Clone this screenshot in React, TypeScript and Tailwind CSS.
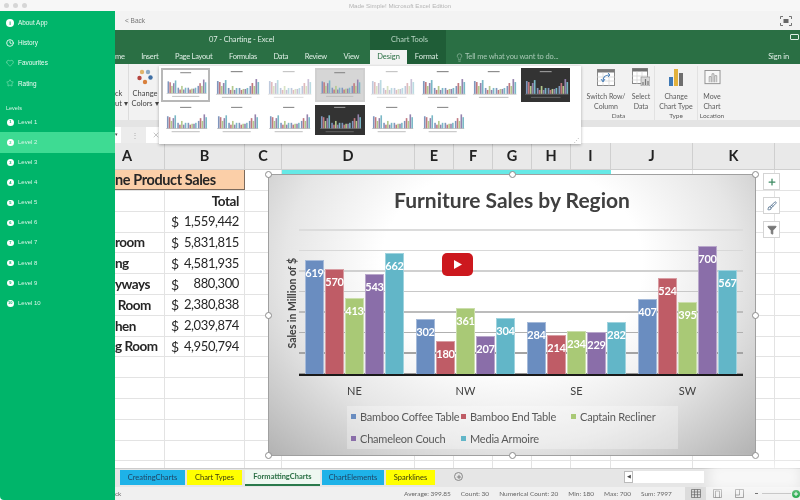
import { Clock, Heart, Star, Plus, Filter, Lightbulb, Brush, X } from "lucide-react";

const LEVELS = ["Level 1", "Level 2", "Level 3", "Level 4", "Level 5", "Level 6", "Level 7", "Level 8", "Level 9", "Level 10"];

const COLUMNS = [
  { name: "A", width: 50, pad: "justify-start pl-[7px]" },
  { name: "B", width: 80, pad: "justify-center" },
  { name: "C", width: 37, pad: "justify-center" },
  { name: "D", width: 133, pad: "justify-center" },
  { name: "E", width: 39, pad: "justify-center" },
  { name: "F", width: 39, pad: "justify-center" },
  { name: "G", width: 39, pad: "justify-center" },
  { name: "H", width: 39, pad: "justify-center" },
  { name: "I", width: 40, pad: "justify-center" },
  { name: "J", width: 82, pad: "justify-center" },
  { name: "K", width: 82, pad: "justify-center" },
];

const SALES = [
  { label: "", amount: "1,559,442" },
  { label: "room", amount: "5,831,815" },
  { label: "ng", amount: "4,581,935" },
  { label: "yways", amount: "880,300" },
  { label: " Room", amount: "2,380,838" },
  { label: "hen", amount: "2,039,874" },
  { label: "g Room", amount: "4,950,794" },
];

const BAR_COLORS = ["bg-[#6a8dc0]", "bg-[#bf5c66]", "bg-[#a9c976]", "bg-[#8a6ea9]", "bg-[#62b6c8]"];

const REGIONS = [
  { name: "NE", values: [619, 570, 413, 543, 662] },
  { name: "NW", values: [302, 180, 361, 207, 304] },
  { name: "SE", values: [284, 214, 234, 229, 282] },
  { name: "SW", values: [407, 524, 395, 700, 567] },
];

const LEGEND = [
  { name: "Bamboo Coffee Table", color: "bg-[#6a8dc0]" },
  { name: "Bamboo End Table", color: "bg-[#bf5c66]" },
  { name: "Captain Recliner", color: "bg-[#a9c976]" },
  { name: "Chameleon Couch", color: "bg-[#8a6ea9]" },
  { name: "Media Armoire", color: "bg-[#62b6c8]" },
];

const GRID_LINES = ["#dcdcdc", "#d8d8d8", "#d0d0d0", "#c8c8c8", "#bcbcbc", "#b0b0b0", "#a4a4a4", "#989898"];

const THUMB_COLORS = ["#7f96bd", "#c0787f", "#b3c98c", "#9582ad", "#7ab8c6"];
const THUMB_HEIGHTS = [
  [13, 12, 8, 11, 14],
  [6, 4, 8, 4, 6],
  [6, 4, 5, 5, 6],
  [8, 11, 8, 15, 12],
];

const GALLERY = [
  { kind: "selected" },
  { kind: "plain" },
  { kind: "pale" },
  { kind: "hover" },
  { kind: "pale" },
  { kind: "plain" },
  { kind: "plain" },
  { kind: "dark" },
  { kind: "plain" },
  { kind: "plain" },
  { kind: "plain" },
  { kind: "dark" },
  { kind: "plain" },
  { kind: "plain" },
];

function MiniChart({ kind }: { kind: string }) {
  const dark = kind === "dark";
  const frame =
    kind === "selected"
      ? "border-2 border-[#b8b8b8] bg-white"
      : kind === "hover"
        ? "border-2 border-[#d0d0d0] bg-[#d6d6d6]"
        : dark
          ? "bg-[#333333]"
          : "bg-white";
  return (
    <div className={`h-full w-full ${frame}`}>
      <svg viewBox="0 0 50 32" className={`h-full w-full ${kind === "pale" ? "opacity-50" : ""}`}>
        <rect x="19" y="2" width="12" height="1" fill={dark ? "#aaaaaa" : "#777777"} />
        {THUMB_HEIGHTS.map((group, g) =>
          group.map((h, b) => (
            <rect
              key={`${g}-${b}`}
              x={5 + g * 11 + b * 2}
              y={25 - h}
              width="1.7"
              height={h}
              fill={THUMB_COLORS[b]}
            />
          )),
        )}
        <rect x="4" y="25" width="44" height="0.5" fill={dark ? "#888888" : "#999999"} />
        <rect x="10" y="28" width="30" height="1" fill={dark ? "#666666" : "#bbbbbb"} />
      </svg>
    </div>
  );
}

function Sidebar() {
  const top = [
    {
      name: "About App",
      icon: (
        <span className="grid h-[8px] w-[8px] place-items-center rounded-full bg-white text-[6px] font-bold leading-none text-[#00b56a]">
          i
        </span>
      ),
    },
    { name: "History", icon: <Clock className="h-[8px] w-[8px]" strokeWidth={2.5} /> },
    { name: "Favourites", icon: <Heart className="h-[8px] w-[8px] text-[#a8ecc9]" strokeWidth={1.5} /> },
    { name: "Rating", icon: <Star className="h-[8px] w-[8px] text-[#a8ecc9]" strokeWidth={1.5} /> },
  ];
  return (
    <aside className="z-10 flex h-full w-[115px] shrink-0 flex-col rounded-bl-[4px] bg-[#00b56a] pt-[2px] font-['Liberation_Sans',sans-serif] text-[#d9f5e7]">
      {top.map((item) => (
        <div key={item.name} className="flex h-[20.1px] items-center gap-[4px] pl-[6px] text-[6.4px] text-[#eefbf4]">
          <span className="grid w-[8px] place-items-center text-white">{item.icon}</span>
          {item.name}
        </div>
      ))}
      <div className="mt-[1px] flex h-[19px] items-end pb-[1px] pl-[6px] text-[5.5px]">Levels</div>
      <div className="mt-[-1px] flex flex-col">
        {LEVELS.map((level, i) => (
          <div
            key={level}
            className={`flex h-[20.1px] items-center gap-[4.5px] pl-[7px] text-[6px] ${i === 1 ? "bg-[#3edb93]" : ""}`}
          >
            <span
              className={`grid h-[6.5px] w-[6.5px] place-items-center rounded-full bg-white text-[4px] font-bold leading-none ${i === 1 ? "text-[#3edb93]" : "text-[#00b56a]"}`}
            >
              {i + 1}
            </span>
            {level}
          </div>
        ))}
      </div>
    </aside>
  );
}

function GreenBar() {
  return (
    <div className="flex h-[34px] shrink-0 whitespace-nowrap bg-[#2a6f44] text-[7.5px] text-[#dfeee5]">
      <div className="flex w-[255px] flex-col">
        <div className="flex h-[20px] items-center pl-[94px] text-[7.5px] tracking-[-0.1px]">07 - Charting - Excel</div>
        <div className="flex h-[14px] items-center gap-[16.5px] tracking-[-0.25px]">
          <span>me</span>
          <span>Insert</span>
          <span>Page Layout</span>
          <span>Formulas</span>
          <span>Data</span>
          <span>Review</span>
          <span>View</span>
        </div>
      </div>
      <div className="flex w-[76px] flex-col bg-[#1f5d37]">
        <div className="flex h-[20px] items-center pl-[21px] text-[#b9d6c4]">Chart Tools</div>
        <div className="flex h-[14px]">
          <span className="flex w-[37px] items-center justify-center bg-[#f3f3f3] text-[#2a6f44]">Design</span>
          <span className="flex flex-1 items-center justify-center">Format</span>
        </div>
      </div>
      <div className="flex flex-1 flex-col">
        <div className="flex h-[20px] items-start justify-end pr-[1px] pt-[4px]">
          <span className="h-[6px] w-[9px] rounded-[1px] border border-[#dfeee5]" />
        </div>
        <div className="flex h-[14px] items-center pl-[9px] tracking-[-0.15px] text-[#a9c9b6]">
          <Lightbulb className="mr-[1px] h-[9px] w-[9px]" strokeWidth={1.5} />
          Tell me what you want to do...
          <span className="ml-auto mr-[11px] text-[#dfeee5]">Sign in</span>
        </div>
      </div>
    </div>
  );
}

function RibbonIcon({ kind }: { kind: string }) {
  if (kind === "switch") {
    return (
      <svg viewBox="0 0 18 17" className="h-[17px] w-[18px]">
        <rect x="0.5" y="0.5" width="17" height="16" fill="#fff" stroke="#8a8a8a" />
        <rect x="0.5" y="0.5" width="17" height="3" fill="#7a7a7a" />
        <path d="M0 8h18M0 12h18M6 3v14M12 3v14" stroke="#c9c9c9" strokeWidth="0.6" />
        <path d="M6 12 C6 8 9 6 12 6" stroke="#3f79b5" strokeWidth="1.2" fill="none" />
        <path d="M4 10l2 3 2-3M11 4l2 2-2 2" stroke="#3f79b5" strokeWidth="0.9" fill="none" />
      </svg>
    );
  }
  if (kind === "select") {
    return (
      <svg viewBox="0 0 18 18" className="h-[18px] w-[18px]">
        <rect x="0.5" y="0.5" width="15" height="15" fill="#fff" stroke="#8a8a8a" />
        <rect x="0.5" y="0.5" width="15" height="3" fill="#6f6f6f" />
        <path d="M0 8h16M0 12h16M5 3v13M10 3v13" stroke="#c9c9c9" strokeWidth="0.6" />
        <rect x="9" y="9" width="9" height="9" fill="#d9d9d9" stroke="#8a8a8a" strokeWidth="0.6" />
        <path d="M11 17v-3M13.5 17v-6M16 17v-4" stroke="#777" strokeWidth="1.2" />
      </svg>
    );
  }
  if (kind === "type") {
    return (
      <svg viewBox="0 0 16 17" className="h-[17px] w-[16px]">
        <rect x="1" y="8" width="4" height="9" fill="#3f79b5" />
        <rect x="6" y="0" width="4" height="17" fill="#e2b13c" />
        <rect x="11" y="4" width="4" height="13" fill="#6e6e6e" />
      </svg>
    );
  }
  return (
    <svg viewBox="0 0 17 17" className="h-[16px] w-[17px]">
      <rect x="0.5" y="0.5" width="16" height="14" fill="#f8f8f8" stroke="#8f8f8f" />
      <path d="M5 13V7h2v6M8 13V4h2v9M11 13V6h2v7" fill="none" stroke="#8f8f8f" strokeWidth="0.8" />
    </svg>
  );
}

function RibbonItem({ kind, lines, width }: { kind: string; lines: string[]; width: string }) {
  return (
    <div className={`flex flex-col items-center whitespace-nowrap ${width}`}>
      <div className="flex h-[20px] items-end">
        <RibbonIcon kind={kind} />
      </div>
      <div className="mt-[5px] text-center text-[7px] leading-[10px]">
        {lines.map((line) => (
          <div key={line}>{line}</div>
        ))}
      </div>
    </div>
  );
}

function Ribbon() {
  return (
    <div className="relative flex h-[56px] shrink-0 bg-[#f2f2f2] text-[#5c5c5c]">
      <div className="flex w-[14px] flex-col whitespace-nowrap border-r border-[#dcdcdc] pt-[25px] text-[7.5px] leading-[10px] text-[#444444]">
        <span>ck</span>
        <span>ut ▾</span>
      </div>
      <div className="flex w-[32px] flex-col items-center whitespace-nowrap pt-[5px] text-[7.5px] leading-[10px] text-[#444444]">
        <svg viewBox="0 0 16 16" className="h-[16px] w-[16px]">
          <circle cx="5" cy="3" r="2.2" fill="#e0b46c" />
          <circle cx="11" cy="3" r="2.2" fill="#8aa8c4" />
          <circle cx="2.5" cy="9" r="2.2" fill="#b5453f" />
          <circle cx="13.5" cy="8.5" r="2.2" fill="#3f6fa5" />
          <circle cx="8" cy="13" r="2.2" fill="#d9803c" />
        </svg>
        <span className="mt-[4px]">Change</span>
        <span>Colors ▾</span>
      </div>
      <div className="ml-auto mr-[74px] flex pt-[2px]">
        <div className="flex w-[72px] flex-col border-r border-[#e2e2e2]">
          <div className="flex h-[45px]">
            <RibbonItem kind="switch" lines={["Switch Row/", "Column"]} width="w-[46px]" />
            <RibbonItem kind="select" lines={["Select", "Data"]} width="w-[24px]" />
          </div>
          <div className="text-center text-[6.5px]">Data</div>
        </div>
        <div className="flex w-[43px] flex-col border-r border-[#e2e2e2]">
          <div className="h-[45px]">
            <RibbonItem kind="type" lines={["Change", "Chart Type"]} width="w-[42px]" />
          </div>
          <div className="text-center text-[6.5px]">Type</div>
        </div>
        <div className="flex w-[28px] flex-col">
          <div className="h-[45px]">
            <RibbonItem kind="move" lines={["Move", "Chart"]} width="w-[28px]" />
          </div>
          <div className="text-center text-[6.5px]">Location</div>
        </div>
      </div>
      <div className="absolute left-[44px] top-[2px] z-[5] h-[78px] w-[422px] bg-white shadow-[0_1px_3px_rgba(0,0,0,0.3)]">
        <div className="grid h-[70px] grid-cols-[repeat(8,51.4px)] grid-rows-[34px_30px] gap-y-[3px] pl-[1px] pt-[2px]">
          {GALLERY.map((item, i) => (
            <div key={i} className="px-[1px]">
              <MiniChart kind={item.kind} />
            </div>
          ))}
        </div>
        <span className="absolute bottom-[1px] right-[2px] text-[5px] leading-none text-[#999999]">⋰</span>
      </div>
    </div>
  );
}

function FormulaRow() {
  return (
    <div className="shrink-0">
      <div className="h-[7px] bg-[#e4e4e4]" />
      <div className="flex h-[16px] items-center bg-[#ececec]">
        <div className="flex h-full w-[6px] items-center bg-white text-[5px] text-[#444444]">▾</div>
        <span className="ml-[10px] text-[8px] leading-none text-[#aaaaaa]">⋮</span>
        <div className="ml-[7px] flex h-full w-[20px] items-center justify-center bg-white">
          <X className="h-[8px] w-[8px] text-[#aaaaaa]" />
        </div>
        <div className="ml-[1px] h-full flex-1 bg-white" />
      </div>
    </div>
  );
}

function SheetRow({ children, height = "h-[20.8px]" }: { children: React.ReactNode; height?: string }) {
  return <div className={`flex ${height} border-b border-[#e3e3e3]`}>{children}</div>;
}

function RestCells({ teal }: { teal?: boolean }) {
  return (
    <>
      {COLUMNS.slice(2).map((col) => {
        const filled = teal && !["C", "J", "K"].includes(col.name);
        return (
          <div
            key={col.name}
            style={{ width: col.width }}
            className={`shrink-0 border-r ${filled ? "border-[#66e9e6] bg-[#66e9e6]" : "border-[#e3e3e3]"}`}
          />
        );
      })}
    </>
  );
}

function HandleDot({ className }: { className: string }) {
  return <span className={`absolute h-[7px] w-[7px] rounded-full border border-[#8c8c8c] bg-white ${className}`} />;
}

function SalesChart() {
  return (
    <div className="absolute left-[153px] top-[4px] h-[282px] w-[488px] border border-[#a0a0a0] bg-[radial-gradient(ellipse_at_50%_32%,#ffffff_38%,#e6e6e6_66%,#b2b2b2_100%)]">
      <HandleDot className="-left-[4px] -top-[4px]" />
      <HandleDot className="left-[240px] -top-[4px]" />
      <HandleDot className="-right-[4px] -top-[4px]" />
      <HandleDot className="-left-[4px] top-[137px]" />
      <HandleDot className="-right-[4px] top-[137px]" />
      <HandleDot className="-left-[4px] -bottom-[4px]" />
      <HandleDot className="left-[240px] -bottom-[4px]" />
      <HandleDot className="-right-[4px] -bottom-[4px]" />

      <h2 className="flex h-[54px] items-center justify-center pb-[5px] text-[21px] font-bold leading-none text-[#404040]">
        Furniture Sales by Region
      </h2>

      <span className="absolute left-[16px] top-[83px] rotate-180 text-[10.5px] font-bold text-[#404040] [writing-mode:vertical-rl]">
        Sales in Million of $
      </span>

      <div className="relative ml-[30px] h-[147px] w-[444px] border-b-2 border-[#1a1a1a]">
        <div className="flex h-full flex-col justify-between">
          {GRID_LINES.map((color) => (
            <div key={color} className="h-[1.5px]" style={{ backgroundColor: color }} />
          ))}
        </div>
        <div className="absolute inset-0 flex items-end gap-[12px] pl-[6px]">
          {REGIONS.map((region) => (
            <div key={region.name} className="flex w-[99px] items-end gap-[1px]">
              {region.values.map((value, i) => (
                <div
                  key={i}
                  style={{ height: value * 0.1835 }}
                  className={`flex w-[19px] justify-center border border-b-0 border-white/40 pt-[5px] text-[11px] font-bold leading-[14px] tracking-[-0.2px] text-white ${BAR_COLORS[i]}`}
                >
                  {value}
                </div>
              ))}
            </div>
          ))}
        </div>
      </div>

      <div className="ml-[30px] flex h-[30px] w-[444px] items-center text-[11px] text-[#404040]">
        {REGIONS.map((region) => (
          <span key={region.name} className="w-[111px] text-center">
            {region.name}
          </span>
        ))}
      </div>

      <div className="ml-[78px] grid h-[43px] w-[331px] grid-cols-[110px_110px_111px] content-center gap-y-[6px] bg-white/30 pl-[4px] text-[11px] leading-[16px] tracking-[-0.2px] text-[#595959]">
        {LEGEND.map((item) => (
          <div key={item.name} className="flex items-center gap-[4px] whitespace-nowrap">
            <span className={`h-[5px] w-[5px] shrink-0 ${item.color}`} />
            {item.name}
          </div>
        ))}
      </div>

      <svg viewBox="0 0 31 23" className="absolute left-[173px] top-[78px] h-[23px] w-[31px]">
        <rect width="31" height="23" rx="5" fill="#cc181e" />
        <path d="M12 7l8 4.5-8 4.5z" fill="#ffffff" />
      </svg>
    </div>
  );
}

function ChartTool({ children }: { children: React.ReactNode }) {
  return (
    <div className="grid h-[17px] w-[17px] place-items-center border border-[#d4d4d4] bg-white">{children}</div>
  );
}

function Sheet() {
  return (
    <div className="min-h-0 flex-1 overflow-hidden bg-white">
      <div className="flex h-[27px] border-b border-[#cfcfcf] bg-[#e9e9e9] text-[14.5px] font-bold text-[#222222]">
        {COLUMNS.map((col) => (
          <div
            key={col.name}
            style={{ width: col.width }}
            className={`flex shrink-0 items-center border-r border-[#cfcfcf] ${col.pad}`}
          >
            {col.name}
          </div>
        ))}
      </div>
      <div className="relative">
        <SheetRow height="h-[21px]">
          <div className="flex w-[130px] shrink-0 items-center whitespace-nowrap border-b border-r border-[#7b6a5c] bg-[#fbcfa8] text-[14.5px] font-bold tracking-[-0.4px] text-[#262626]">
            ne Product Sales
          </div>
          <RestCells teal />
        </SheetRow>
        <SheetRow>
          <div className="w-[50px] shrink-0 border-r border-[#e3e3e3]" />
          <div className="flex w-[80px] shrink-0 items-center justify-end border-r border-[#e3e3e3] pr-[5px] text-[13.5px] font-bold tracking-[-0.4px] text-[#262626]">
            Total
          </div>
          <RestCells />
        </SheetRow>
        {SALES.map((row) => (
          <SheetRow key={row.amount}>
            <div className="flex w-[50px] shrink-0 items-center whitespace-pre border-r border-[#e3e3e3] text-[13.5px] font-bold tracking-[-0.5px] text-[#262626]">
              {row.label}
            </div>
            <div className="flex w-[80px] shrink-0 items-center justify-between border-r border-[#e3e3e3] pl-[6px] pr-[5px] text-[13px] tracking-[-0.4px] text-[#262626]">
              <span className="text-[14px]">$</span>
              <span>{row.amount}</span>
            </div>
            <RestCells />
          </SheetRow>
        ))}
        {[0, 1, 2, 3, 4, 5].map((i) => (
          <SheetRow key={i}>
            <div className="w-[50px] shrink-0 border-r border-[#e3e3e3]" />
            <div className="w-[80px] shrink-0 border-r border-[#e3e3e3]" />
            <RestCells />
          </SheetRow>
        ))}
        <SalesChart />
        <div className="absolute left-[648px] top-[3px] flex flex-col gap-[7px]">
          <ChartTool>
            <Plus className="h-[10px] w-[10px] text-[#3d8a63]" strokeWidth={3} />
          </ChartTool>
          <ChartTool>
            <Brush className="h-[10px] w-[10px] text-[#4a6a8a]" />
          </ChartTool>
          <ChartTool>
            <Filter className="h-[10px] w-[10px] fill-[#777777] text-[#777777]" />
          </ChartTool>
        </div>
      </div>
    </div>
  );
}

function SheetTabs() {
  const tabClass = "flex h-[15px] items-center justify-center whitespace-nowrap text-[7.5px] text-[#1f3f5f]";
  return (
    <div className="flex h-[19px] shrink-0 items-start border-t border-[#cccccc] bg-[#e6e6e6] pt-[1px]">
      <div className={`${tabClass} ml-[5px] w-[65px] bg-[#1eb2e8]`}>CreatingCharts</div>
      <div className={`${tabClass} ml-[2px] w-[55px] bg-[#ffff00] text-[#3a3a10]`}>Chart Types</div>
      <div className="ml-[3px] flex h-[16px] w-[75px] items-center justify-center whitespace-nowrap border-b-2 border-[#2a7a4c] bg-[#eef8f1] text-[7.5px] font-bold text-[#2a6f44]">
        FormattingCharts
      </div>
      <div className={`${tabClass} ml-[2px] w-[62px] bg-[#1eb2e8]`}>ChartElements</div>
      <div className={`${tabClass} ml-[2px] w-[49px] bg-[#ffff00] text-[#3a3a10]`}>Sparklines</div>
      <span className="ml-[19px] mt-[2px] grid h-[9px] w-[9px] place-items-center rounded-full border border-[#888888]">
        <Plus className="h-[6px] w-[6px] text-[#666666]" strokeWidth={3} />
      </span>
      <div className="ml-[161px] mt-[1px] flex h-[12px] w-[80px]">
        <span className="grid w-[9px] place-items-center border border-[#bbbbbb] bg-white text-[5px] text-[#444444]">◀</span>
        <span className="flex-1 bg-white" />
      </div>
    </div>
  );
}

function StatusBar() {
  return (
    <div className="flex h-[13px] shrink-0 items-center whitespace-nowrap bg-[#f0f0f0] text-[6.5px] text-[#666666]">
      <span className="w-[289px] shrink-0">ck</span>
      <div className="flex w-[281px] shrink-0 gap-[10px]">
        <span>Average: 399.85</span>
        <span>Count: 30</span>
        <span>Numerical Count: 20</span>
        <span>Min: 180</span>
        <span>Max: 700</span>
        <span>Sum: 7997</span>
      </div>
      <div className="flex h-full w-[21px] shrink-0 items-center justify-center bg-[#dcdcdc]">
        <svg viewBox="0 0 10 9" className="h-[9px] w-[10px]">
          <path d="M0.5 0.5h9v8h-9zM0.5 3h9M0.5 5.7h9M3.5 0.5v8M6.5 0.5v8" fill="none" stroke="#666666" strokeWidth="0.7" />
        </svg>
      </div>
      <svg viewBox="0 0 9 9" className="ml-[7px] h-[9px] w-[9px] shrink-0">
        <path d="M0.5 0.5h8v8h-8zM2.5 2h4v7h-4z" fill="none" stroke="#888888" strokeWidth="0.7" />
      </svg>
      <svg viewBox="0 0 9 9" className="ml-[13px] h-[9px] w-[9px] shrink-0">
        <path d="M0.5 0.5h8v8h-8zM0.5 6h4V0.5" fill="none" stroke="#777777" strokeWidth="0.7" />
      </svg>
      <span className="ml-[11px] h-[1px] w-[3px] shrink-0 bg-[#555555]" />
      <span className="ml-[4px] h-[1px] w-[29px] shrink-0 bg-[#bbbbbb]" />
      <span className="ml-[1px] grid h-[8px] w-[8px] shrink-0 place-items-center rounded-full bg-[#22a84a]">
        <Plus className="h-[6px] w-[6px] text-white" strokeWidth={4} />
      </span>
    </div>
  );
}

export default function App() {
  return (
    <div className="relative flex h-[500px] w-[800px] flex-col overflow-hidden bg-white font-['Lato',sans-serif] blur-[0.4px]">
      <header className="relative flex h-[11px] shrink-0 items-center justify-center bg-[#f7f7f7] font-['Liberation_Sans',sans-serif] text-[6.2px] text-[#b4b4b4]">
        <div className="absolute left-[4px] flex gap-[4px]">
          <span className="h-[5px] w-[5px] rounded-full bg-[#d6d6d6]" />
          <span className="h-[5px] w-[5px] rounded-full bg-[#d6d6d6]" />
          <span className="h-[5px] w-[5px] rounded-full bg-[#d6d6d6]" />
        </div>
        Made Simple! Microsoft Excel Edition
      </header>

      <div className="flex min-h-0 flex-1">
        <Sidebar />
        <main className="relative flex min-w-0 flex-1 flex-col overflow-hidden">
          <div className="flex h-[19px] shrink-0 items-center justify-between bg-[#f3f3f3] pl-[10px] pr-[8px] font-['Liberation_Sans',sans-serif] text-[6.5px] text-[#777777]">
            <span>&lt; Back</span>
            <svg viewBox="0 0 12 10" className="h-[10px] w-[12px]">
              <path d="M0.5 3V0.5H3M9 0.5h2.5V3M11.5 7v2.5H9M3 9.5H0.5V7" fill="none" stroke="#555555" strokeWidth="0.8" />
              <rect x="3.5" y="3" width="5" height="4" fill="#666666" />
            </svg>
          </div>
          <GreenBar />
          <Ribbon />
          <FormulaRow />
          <Sheet />
          <SheetTabs />
          <StatusBar />
          <div className="absolute bottom-[10px] right-0 h-[26px] w-[90px] bg-white/70 blur-[6px]" />
        </main>
      </div>
    </div>
  );
}
